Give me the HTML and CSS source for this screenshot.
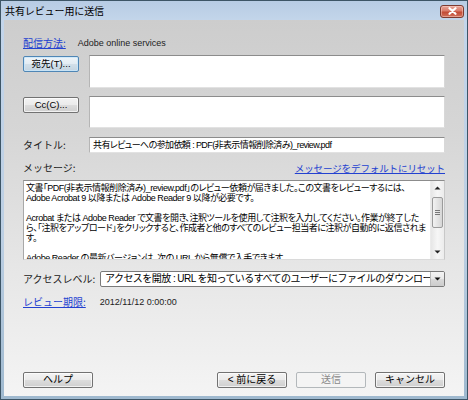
FILE: index.html
```html
<!DOCTYPE html>
<html lang="ja">
<head>
<meta charset="utf-8">
<title>共有レビュー用に送信</title>
<link rel="stylesheet" href="styles.css">
</head>
<body>
<div class="window">
  <div class="titlebar">
    <span class="title">共有レビュー用に送信</span>
    <span class="close"><svg width="11" height="8" viewBox="0 0 11 8"><path d="M2.5 1.2 L8.5 6.8 M8.5 1.2 L2.5 6.8" stroke="#fff" stroke-width="2.2" stroke-linecap="round"/></svg></span>
  </div>
  <div class="client">
    <div class="row delivery">
      <a class="link">配信方法:</a>
      <span class="value">Adobe online services</span>
    </div>
    <div class="row addr first">
      <div class="btn btn-addr default">宛先(T)...</div>
      <div class="field multi"></div>
    </div>
    <div class="row addr second">
      <div class="btn btn-addr">Cc(C)...</div>
      <div class="field multi"></div>
    </div>
    <div class="row subject">
      <span class="label">タイトル:</span>
      <div class="field single">共有レビューへの参加依頼 : PDF(非表示情報削除済み)_review.pdf</div>
    </div>
    <div class="row msghead">
      <span class="label">メッセージ:</span>
      <a class="link reset">メッセージをデフォルトにリセット</a>
    </div>
    <div class="msgbox">
      <div class="msgtext">
        <div class="line">文書「PDF(非表示情報削除済み)_review.pdf」のレビュー依頼が届きました。この文書をレビューするには、</div>
        <div class="line">Adobe Acrobat 9 以降または Adobe Reader 9 以降が必要です。</div>
        <div class="line">&nbsp;</div>
        <div class="line">Acrobat または Adobe Reader で文書を開き、注釈ツールを使用して注釈を入力してください。作業が終了した</div>
        <div class="line">ら、「注釈をアップロード」をクリックすると、作成者と他のすべてのレビュー担当者に注釈が自動的に返信されま</div>
        <div class="line">す。</div>
        <div class="line">&nbsp;</div>
        <div class="line">Adobe Reader の最新バージョンは、次の URL から無償で入手できます。</div>
      </div>
      <div class="scrollbar">
        <div class="sb-arrow"><svg width="7" height="4" viewBox="0 0 7 4"><path d="M0.5 3.5 L3.5 0.5 L6.5 3.5 Z" fill="#222"/></svg></div>
        <div class="sb-track">
          <div class="sb-thumb"><span class="grip"></span><span class="grip"></span><span class="grip"></span></div>
        </div>
        <div class="sb-arrow"><svg width="7" height="4" viewBox="0 0 7 4"><path d="M0.5 0.5 L3.5 3.5 L6.5 0.5 Z" fill="#222"/></svg></div>
      </div>
    </div>
    <div class="row access">
      <span class="label">アクセスレベル:</span>
      <div class="select">
        <span class="select-text">アクセスを開放 : URL を知っているすべてのユーザーにファイルのダウンロードを許可</span>
        <span class="select-arrow"><svg width="7" height="4" viewBox="0 0 7 4"><path d="M0.5 0.5 L3.5 3.5 L6.5 0.5 Z" fill="#111"/></svg></span>
      </div>
    </div>
    <div class="row deadline">
      <a class="link">レビュー期限:</a>
      <span class="value">2012/11/12 0:00:00</span>
    </div>
    <div class="footer">
      <div class="btn btn-foot">ヘルプ</div>
      <div class="footer-right">
        <div class="btn btn-foot">&lt; 前に戻る</div>
        <div class="btn btn-foot disabled">送信</div>
        <div class="btn btn-foot">キャンセル</div>
      </div>
    </div>
  </div>
</div>
</body>
</html>
```

FILE: styles.css
```css
* {
  box-sizing: border-box;
  margin: 0;
  padding: 0;
}

html, body {
  width: 468px;
  height: 400px;
  overflow: hidden;
  background: #ffffff;
}

body {
  font-family: "Noto Sans CJK JP", sans-serif;
  color: #000;
}

.window {
  width: 468px;
  height: 400px;
  display: flex;
  flex-direction: column;
  border: 1px solid #3d5566;
  padding: 0 3px 3px 3px;
  background: linear-gradient(180deg, #b7cce4 0px, #c3d5ea 19px, #bccfe3 60%, #9fb9cf 100%);
}

.titlebar {
  height: 19px;
  flex: 0 0 19px;
  display: flex;
  align-items: center;
  justify-content: space-between;
  padding-left: 1px;
}

.title {
  font-size: 10px;
  line-height: 14px;
  color: #000;
  letter-spacing: -0.1px;
}

.close {
  width: 24px;
  height: 13px;
  margin-top: 1px;
  border: 1px solid #7d3a30;
  border-radius: 3px;
  background: linear-gradient(180deg, #e9a598 0%, #d97b6a 45%, #c24a35 55%, #d0715c 100%);
  display: flex;
  align-items: center;
  justify-content: center;
  box-shadow: inset 0 0 0 1px rgba(255, 220, 210, 0.45);
}

.client {
  flex: 1 1 auto;
  display: flex;
  flex-direction: column;
  padding: 16px 19px 8px 19px;
  background: linear-gradient(180deg, #cdcdcd 0%, #d6d6d6 30%, #e6e6e6 65%, #f4f4f4 100%);
}

.row {
  display: flex;
  align-items: center;
}

.link {
  color: #2341d0;
  text-decoration: underline;
  font-size: 10px;
  line-height: 14px;
  cursor: pointer;
}

.link.reset {
  font-size: 9.5px;
  letter-spacing: -0.1px;
}

.label {
  font-size: 10px;
  line-height: 14px;
  color: #1a1a1a;
}

.value {
  font-family: "Liberation Sans", sans-serif;
  font-size: 9px;
  color: #222;
}

.delivery {
  height: 14px;
}

.delivery .value {
  margin-left: 12px;
}

.deadline {
  height: 14px;
  margin-top: 8px;
}

.deadline .value {
  margin-left: 14px;
}

.addr {
  align-items: flex-start;
}

.addr.first {
  margin-top: 5px;
  height: 33px;
}

.addr.second {
  margin-top: 8px;
  height: 32px;
}

.field {
  background: #ffffff;
  border-top: 1px solid #8c8c8c;
  border-left: 1px solid #b5b5b5;
  border-right: 1px solid #d8d8d8;
  border-bottom: 1px solid #e2e2e2;
}

.field.multi {
  width: 356px;
  height: 100%;
  margin-left: auto;
}

.btn {
  height: 16px;
  border: 1px solid #727272;
  border-radius: 2px;
  background: linear-gradient(180deg, #f3f3f3 0%, #ebebeb 48%, #dcdcdc 52%, #cfcfcf 100%);
  box-shadow: inset 0 0 0 1px rgba(255, 255, 255, 0.7);
  display: flex;
  align-items: center;
  justify-content: center;
  font-family: "Liberation Sans", "Noto Sans CJK JP", sans-serif;
  font-size: 10px;
  line-height: 12px;
  color: #000;
}

.btn-addr {
  width: 56px;
  margin-top: 1px;
  font-size: 9.5px;
}

.btn.default {
  border-color: #4f86b5;
  background: linear-gradient(180deg, #eef4f9 0%, #e3ecf3 48%, #d2dfe9 52%, #c4d4e1 100%);
  box-shadow: inset 0 0 0 1px rgba(200, 230, 250, 0.8);
}

.subject {
  margin-top: 9px;
  height: 16px;
}

.field.single {
  width: 356px;
  height: 16px;
  margin-left: auto;
  padding-left: 3px;
  font-size: 9px;
  line-height: 14px;
  letter-spacing: -0.6px;
  white-space: nowrap;
  overflow: hidden;
  font-family: "Liberation Sans", "Noto Sans CJK JP", sans-serif;
  font-feature-settings: "palt";
  color: #000;
}

.msghead {
  margin-top: 8px;
  height: 14px;
  justify-content: space-between;
}

.msgbox {
  margin-top: 5px;
  height: 80px;
  display: flex;
  background: #ffffff;
  border-top: 1px solid #8c8c8c;
  border-left: 1px solid #a8a8a8;
  border-right: 1px solid #c8c8c8;
  border-bottom: 1px solid #dadada;
  overflow: hidden;
}

.msgtext {
  flex: 1 1 auto;
  padding: 2px 0 0 2px;
  overflow: hidden;
  font-family: "Liberation Sans", "Noto Sans CJK JP", sans-serif;
  font-size: 9px;
  line-height: 10px;
  letter-spacing: -0.45px;
  font-feature-settings: "palt";
  color: #000;
}

.line {
  white-space: nowrap;
  height: 10px;
}

.scrollbar {
  flex: 0 0 14px;
  width: 14px;
  display: flex;
  flex-direction: column;
  background: linear-gradient(90deg, #e6e6e6, #f6f6f6 50%, #ececec);
  border-left: 1px solid #ebebeb;
}

.sb-arrow {
  height: 14px;
  flex: 0 0 14px;
  display: flex;
  align-items: center;
  justify-content: center;
}

.sb-track {
  flex: 1 1 auto;
  padding-top: 2px;
}

.sb-thumb {
  margin: 0 1px;
  height: 31px;
  border: 1px solid #9b9b9b;
  border-radius: 2px;
  background: linear-gradient(90deg, #f2f2f2, #e4e4e4 50%, #d6d6d6);
  display: flex;
  flex-direction: column;
  align-items: center;
  justify-content: center;
  gap: 1px;
}

.grip {
  display: block;
  width: 5px;
  height: 1px;
  background: #777;
}

.access {
  margin-top: 11px;
  height: 16px;
}

.select {
  width: 345px;
  height: 16px;
  margin-left: auto;
  display: flex;
  background: #ffffff;
  border: 1px solid #7a7a7a;
  border-radius: 2px;
  overflow: hidden;
}

.select-text {
  flex: 1 1 auto;
  padding-left: 4px;
  font-family: "Liberation Sans", "Noto Sans CJK JP", sans-serif;
  font-size: 10px;
  line-height: 14px;
  white-space: nowrap;
  overflow: hidden;
  letter-spacing: -0.55px;
}

.select-arrow {
  flex: 0 0 14px;
  display: flex;
  align-items: center;
  justify-content: center;
  border-left: 1px solid #b9b9b9;
  background: linear-gradient(180deg, #f4f4f4 0%, #e9e9e9 50%, #d9d9d9 52%, #cccccc 100%);
}

.footer {
  margin-top: auto;
  display: flex;
  justify-content: space-between;
  height: 16px;
}

.footer-right {
  display: flex;
  gap: 9px;
}

.btn-foot {
  width: 70px;
}

.btn.disabled {
  border-color: #b3b8bb;
  background: #f4f4f4;
  box-shadow: none;
  color: #8a8a8a;
}
```
